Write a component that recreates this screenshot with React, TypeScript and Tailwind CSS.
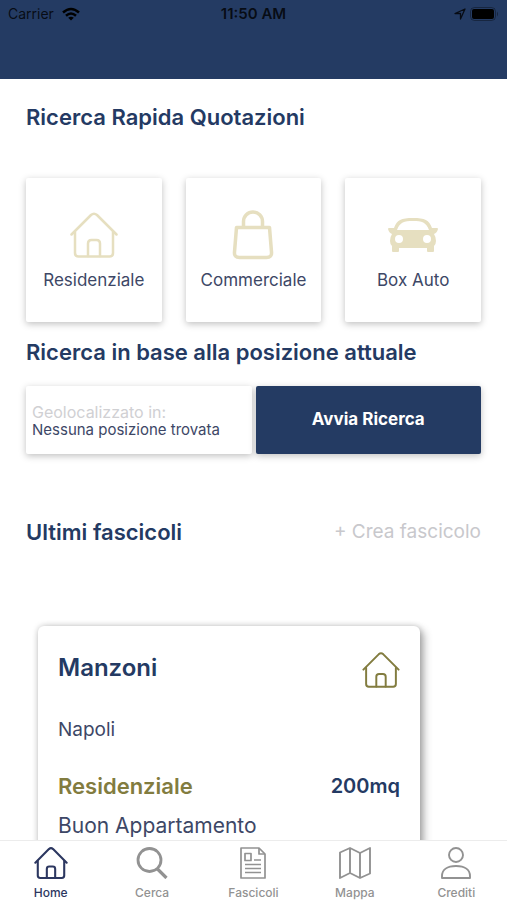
import { ReactNode, useState } from "react";

interface IconProps {
  className?: string;
}

function HouseIcon({ className }: IconProps) {
  return (
    <svg
      viewBox="0 0 48 46"
      className={className}
      fill="none"
      stroke="currentColor"
      strokeLinecap="round"
      strokeLinejoin="round"
      aria-hidden="true"
    >
      <path d="M1.500 22.500 21 3q3-2.600 6 0l19.500 19.500" />
      <path d="M5 20v21q0 3.500 3.500 3.500h31q3.500 0 3.500-3.500V20" />
      <path d="M18 44V31.500q0-3.500 3.500-3.500h5q3.500 0 3.500 3.500V44" />
    </svg>
  );
}

function BagIcon({ className }: IconProps) {
  return (
    <svg
      viewBox="0 0 42 50"
      className={className}
      fill="none"
      stroke="currentColor"
      strokeWidth="3.500"
      strokeLinejoin="round"
      aria-hidden="true"
    >
      <path d="M4.500 17.500h33L39.500 42q.5 5.500-5 5.500h-27q-5.500 0-5-5.500Z" />
      <path d="M11.500 17.500v-6a9.500 9.500 0 0 1 19 0v6" />
    </svg>
  );
}

function CarIcon({ className }: IconProps) {
  return (
    <svg viewBox="0 0 50 36" className={className} fill="currentColor" aria-hidden="true">
      <path
        fillRule="evenodd"
        d="M1 11h5C9 3 13 1 25 1s16 2 19 10h5q1 0 1 1-1 4-4 5 2 3 2 7 0 3-2 5v5q0 1-1 1h-5q-1 0-1-1v-3H11v3q0 1-1 1H5q-1 0-1-1v-5q-2-2-2-5 0-4 2-7-3-1-4-5 0-1 1-1Zm8 2h32C38 5 34 4 25 4S12 5 9 13Zm2 5a4 4 0 1 0 0 8 4 4 0 0 0 0-8Zm28 0a4 4 0 1 0 0 8 4 4 0 0 0 0-8Z"
      />
    </svg>
  );
}

function SearchIcon({ className }: IconProps) {
  return (
    <svg viewBox="0 0 32 32" className={className} fill="none" stroke="currentColor" aria-hidden="true">
      <circle cx="13.500" cy="13" r="11.500" strokeWidth="2.800" />
      <path d="m21.500 22 9 9" strokeWidth="3.200" />
    </svg>
  );
}

function FileIcon({ className }: IconProps) {
  return (
    <svg
      viewBox="0 0 26 32"
      className={className}
      fill="none"
      stroke="currentColor"
      strokeWidth="1.700"
      strokeLinejoin="round"
      aria-hidden="true"
    >
      <path d="M1 1h18l6 6v24H1Z" />
      <path d="M19 1v6h6M5 6.500h6v7H5ZM14 13h7M5 17.500h16M5 21.500h16M5 25.500h16" />
    </svg>
  );
}

function MapIcon({ className }: IconProps) {
  return (
    <svg
      viewBox="0 0 32 32"
      className={className}
      fill="none"
      stroke="currentColor"
      strokeWidth="1.900"
      strokeLinejoin="round"
      aria-hidden="true"
    >
      <path d="M1 5.500 11 1l10 5 10-5v25.500L21 31l-10-5L1 31ZM11 1v25M21 6v25" />
    </svg>
  );
}

function PersonIcon({ className }: IconProps) {
  return (
    <svg
      viewBox="0 0 30 32"
      className={className}
      fill="none"
      stroke="currentColor"
      strokeWidth="1.900"
      strokeLinejoin="round"
      aria-hidden="true"
    >
      <circle cx="15" cy="8" r="7" />
      <path d="M1 31v-2c0-6 5-10 14-10s14 4 14 10v2Z" />
    </svg>
  );
}

function StatusBar() {
  return (
    <div className="grid grid-cols-3 items-center px-2 pt-1 text-[14px] leading-5 text-black/80">
      <div className="flex items-center gap-2">
        Carrier
        <svg viewBox="0 0 18 14" className="h-3.5 w-[18px]" fill="none" stroke="#000" strokeWidth="2.500" aria-hidden="true">
          <path d="M1 5.500q8-7 16 0M4 8.800q5-4.500 10 0" />
          <path d="M9 13.500 6.200 10.800q2.800-2.200 5.600 0Z" fill="#000" stroke="none" />
        </svg>
      </div>
      <div className="text-center text-[15px] font-semibold">11:50 AM</div>
      <div className="flex items-center justify-end gap-1">
        <svg viewBox="0 0 12 12" className="size-3" fill="none" stroke="currentColor" strokeWidth="1.300" strokeLinejoin="round" aria-hidden="true">
          <path d="M11 1 1 5.500h5.500V11Z" />
        </svg>
        <svg viewBox="0 0 29 14" className="h-3.5 w-[29px]" aria-hidden="true">
          <rect x="0.500" y="0.500" width="25" height="13" rx="4" fill="none" stroke="#000" strokeOpacity="0.350" />
          <rect x="2" y="2" width="22" height="10" rx="2" fill="#000" />
          <path d="M27 4.500q2 2.500 0 5Z" fillOpacity="0.400" />
        </svg>
      </div>
    </div>
  );
}

interface CategoryProps {
  label: string;
  children: ReactNode;
}

function CategoryCard({ label, children }: CategoryProps) {
  return (
    <button
      type="button"
      className="flex h-36 flex-col items-center rounded-xs bg-white pt-8 text-[17px] leading-6 text-[#3d4766] shadow-[0_2px_7px_rgba(0,0,0,0.25)]"
    >
      <span className="flex h-[50px] items-center text-[#e6dfc0]">{children}</span>
      <span className="mt-2">{label}</span>
    </button>
  );
}

const tabs = [
  { label: "Home", icon: <HouseIcon className="h-8 w-[34px] stroke-3" /> },
  { label: "Cerca", icon: <SearchIcon className="size-8" /> },
  { label: "Fascicoli", icon: <FileIcon className="h-8 w-[26px]" /> },
  { label: "Mappa", icon: <MapIcon className="size-8" /> },
  { label: "Crediti", icon: <PersonIcon className="h-8 w-[30px]" /> },
];

export default function App() {
  const [activeTab, setActiveTab] = useState("Home");

  return (
    <div className="flex h-screen flex-col overflow-hidden bg-white font-['Inter',sans-serif] text-[#243a63]">
      <header className="h-[79px] shrink-0 bg-[#243b63]">
        <StatusBar />
      </header>

      <main className="min-h-0 flex-1 overflow-hidden px-[26px] pt-6">
        <h2 className="text-[22px] leading-7 font-semibold">Ricerca Rapida Quotazioni</h2>

        <div className="mt-[47px] grid grid-cols-3 gap-6">
          <CategoryCard label="Residenziale">
            <HouseIcon className="h-[46px] w-12 stroke-[2.500]" />
          </CategoryCard>
          <CategoryCard label="Commerciale">
            <BagIcon className="h-[50px] w-[42px]" />
          </CategoryCard>
          <CategoryCard label="Box Auto">
            <CarIcon className="h-9 w-[50px]" />
          </CategoryCard>
        </div>

        <h2 className="mt-4 text-[22px] leading-7 font-semibold">Ricerca in base alla posizione attuale</h2>

        <div className="mt-5 grid h-[68px] grid-cols-2 gap-1">
          <div className="flex flex-col justify-center rounded-xs bg-white px-1.5 pt-0.5 shadow-[0_2px_7px_rgba(0,0,0,0.25)]">
            <p className="text-[16px] leading-[18px] text-[#d0d0d3]">Geolocalizzato in:</p>
            <p className="text-[15px] leading-[18px] text-[#3d4766]">Nessuna posizione trovata</p>
          </div>
          <button
            type="button"
            className="rounded-xs bg-[#243b63] text-[17px] font-bold text-white shadow-[0_2px_7px_rgba(0,0,0,0.25)]"
          >
            Avvia Ricerca
          </button>
        </div>

        <div className="mt-16 flex items-center justify-between">
          <h2 className="text-[22px] leading-7 font-semibold">Ultimi fascicoli</h2>
          <button type="button" className="text-[19px] leading-7 text-[#c8c8cc]">
            + Crea fascicolo
          </button>
        </div>

        <article className="mt-20 mr-[61px] ml-3 h-80 rounded-md bg-white px-5 pt-[26px] shadow-[4px_4px_8px_rgba(0,0,0,0.3),0_0_6px_rgba(0,0,0,0.2)]">
          <div className="flex items-start justify-between">
            <h3 className="text-[24px] leading-8 font-semibold">Manzoni</h3>
            <HouseIcon className="h-9 w-[38px] stroke-[2.500] text-[#827c3f]" />
          </div>
          <p className="mt-7 text-[19px] leading-7 text-[#3d4766]">Napoli</p>
          <div className="mt-7 flex items-center justify-between">
            <p className="text-[22px] leading-7 font-semibold text-[#827c3f]">Residenziale</p>
            <p className="text-[20px] leading-7 font-semibold">200mq</p>
          </div>
          <p className="mt-3 text-[21px] leading-7 text-[#3d4766]">Buon Appartamento</p>
        </article>
      </main>

      <nav className="grid h-[60px] shrink-0 grid-cols-5 border-t border-[#ececec] bg-white">
        {tabs.map((tab) => (
          <button
            key={tab.label}
            type="button"
            onClick={() => setActiveTab(tab.label)}
            className={
              tab.label === activeTab
                ? "flex flex-col items-center gap-1.5 pt-1.5 text-[12px] leading-4 font-medium text-[#2c3760]"
                : "flex flex-col items-center gap-1.5 pt-1.5 text-[12px] leading-4 font-medium text-[#929292]"
            }
          >
            {tab.icon}
            {tab.label}
          </button>
        ))}
      </nav>
    </div>
  );
}
